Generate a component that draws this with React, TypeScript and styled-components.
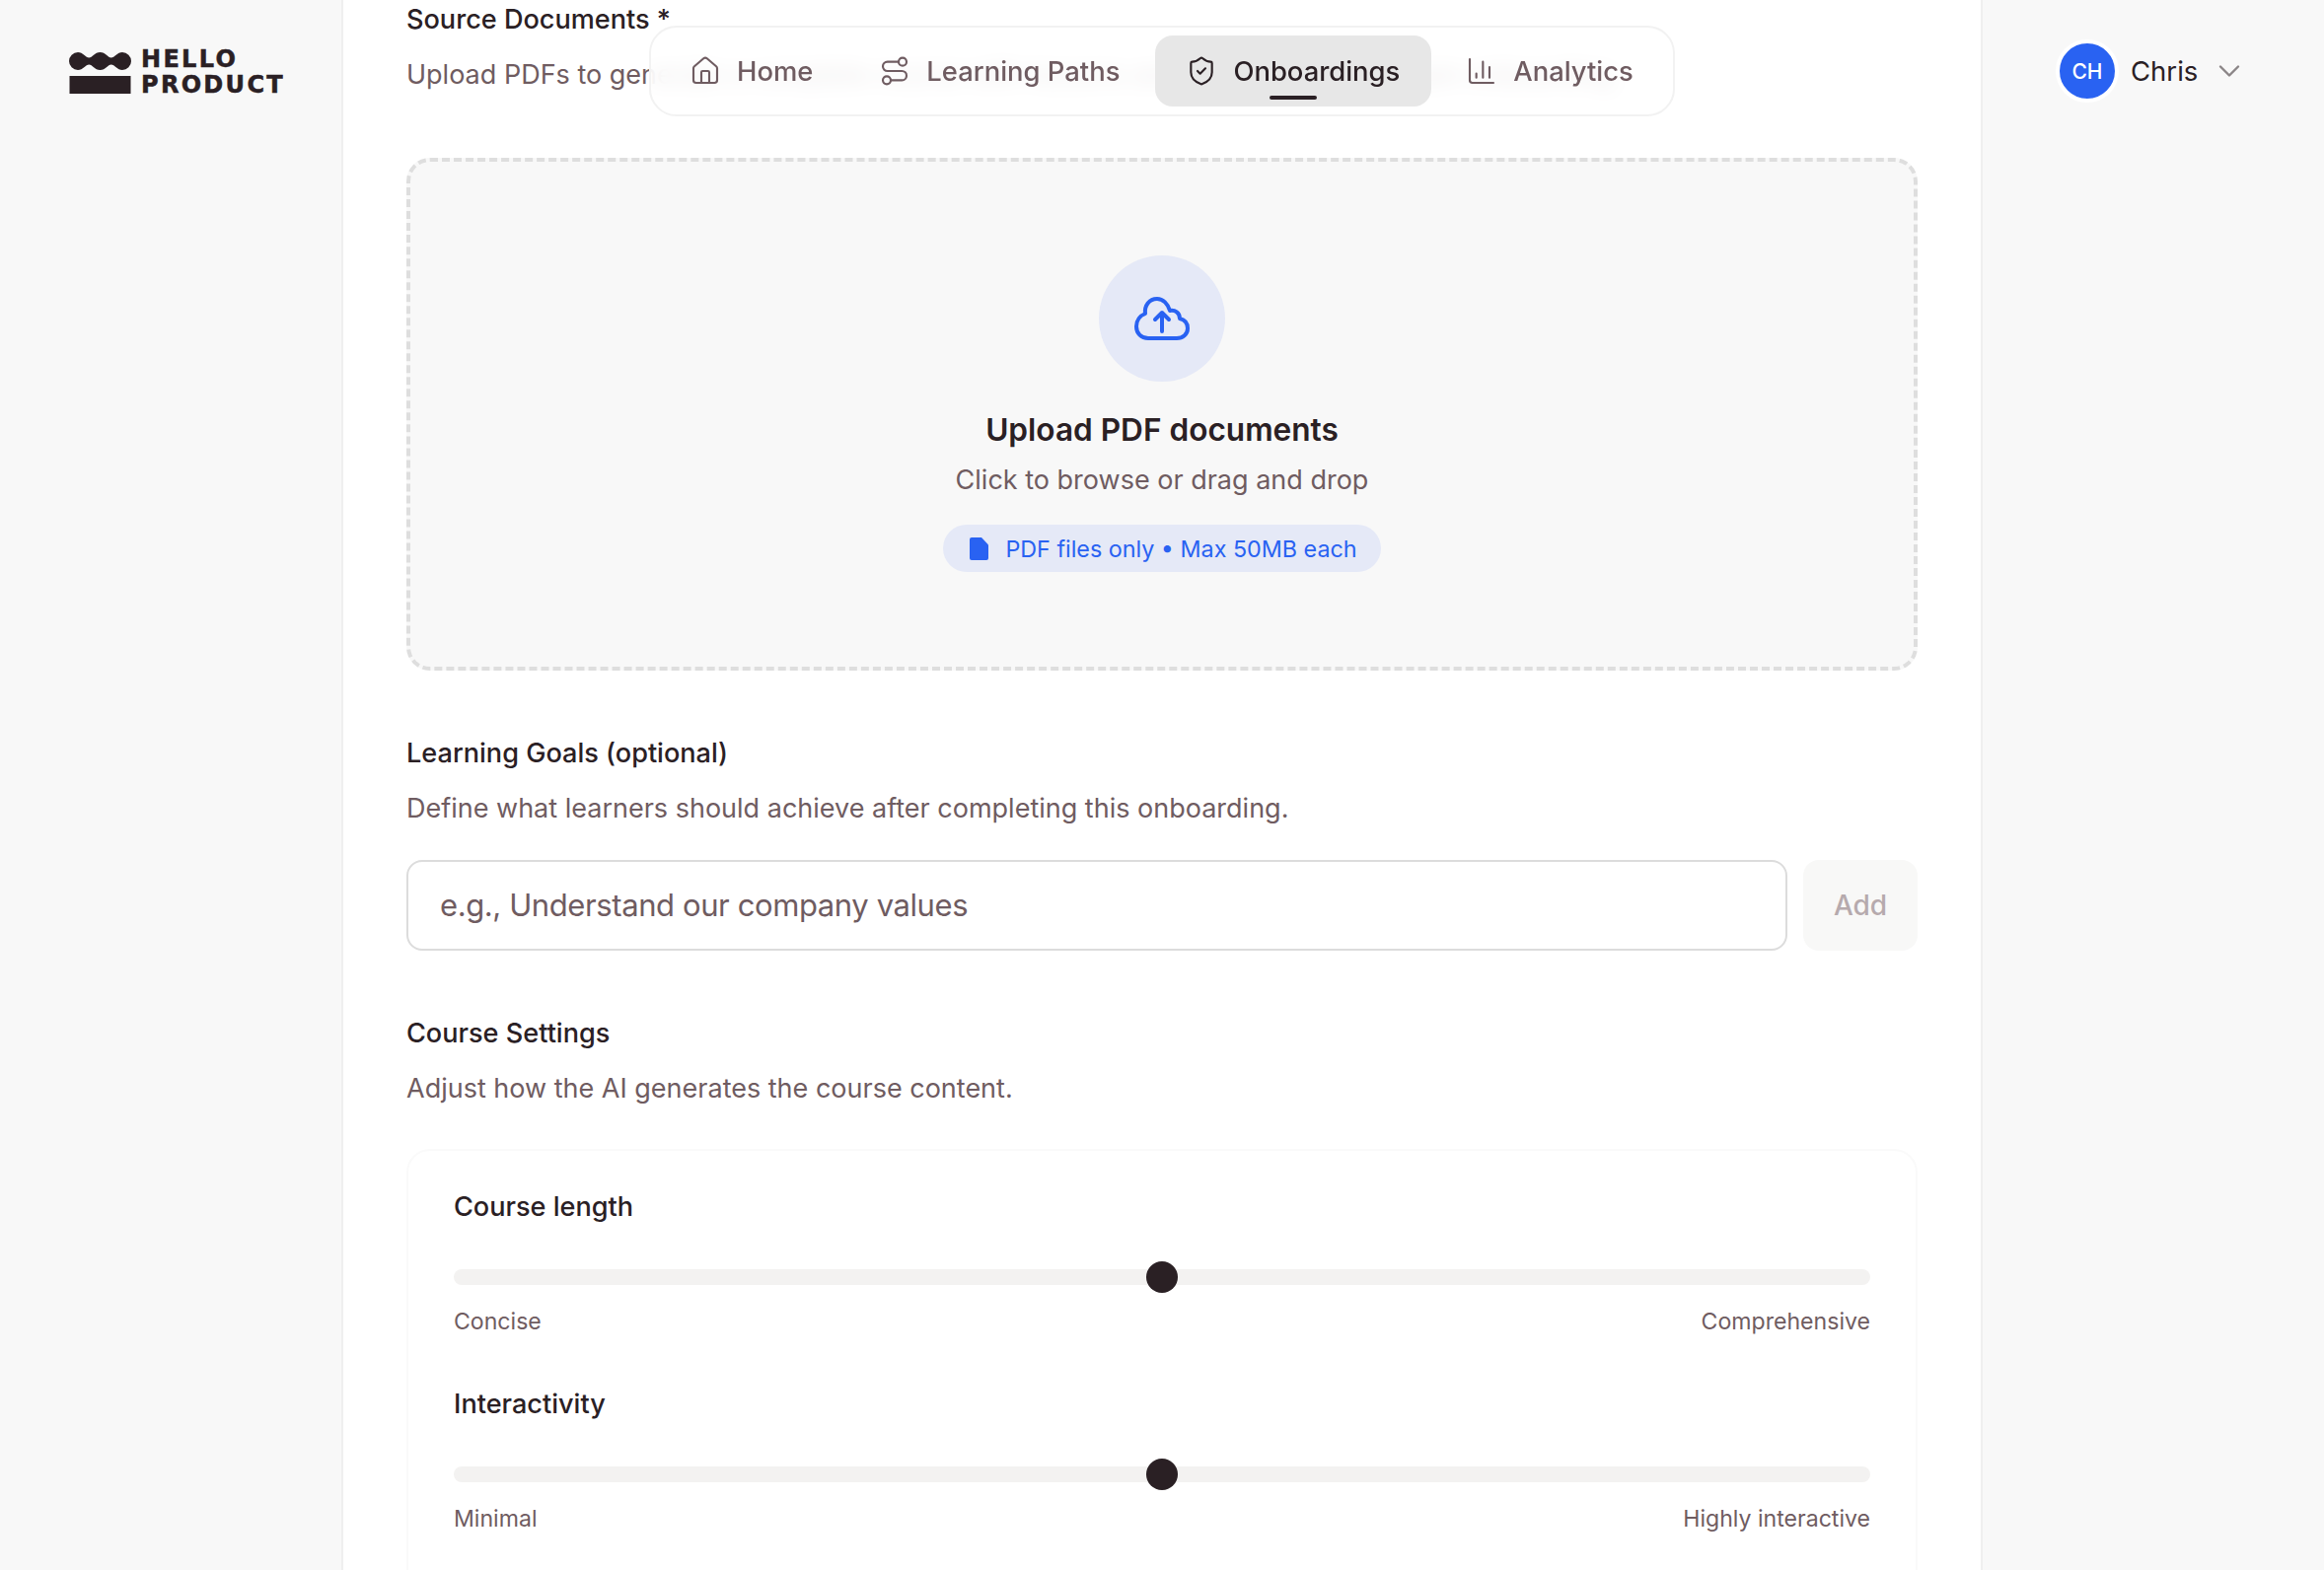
import { ChevronDown, ChartColumn, House, Route, ShieldCheck } from 'lucide-react';
import type { ComponentType } from 'react';
import styled, { createGlobalStyle } from 'styled-components';

const ink = '#2a2024';
const muted = '#6f5c61';
const blue = '#2962f2';
const paleBlue = '#e5e9f7';
const font = `Inter, 'Liberation Sans', sans-serif`;

const GlobalStyle = createGlobalStyle`
  html, body {
    margin: 0;
    height: 100%;
    overflow: hidden;
    background: #f8f8f8;
    font-family: ${font};
    color: ${ink};
  }
  * {
    box-sizing: border-box;
  }
`;

const Shell = styled.div`
  position: relative;
  display: grid;
  grid-template-columns: 346px 1fr 346px;
  height: 1592px;
  overflow: hidden;
`;

const LeftRail = styled.aside`
  display: flex;
  align-items: flex-start;
  padding: 49px 0 0 70px;
`;

const Logo = styled.div`
  display: flex;
  align-items: center;
  gap: 10px;
`;

const LogoText = styled.div`
  margin-top: -2px;
  font-family: 'DejaVu Sans', sans-serif;
  font-weight: 700;
  font-size: 24px;
  line-height: 26px;
  letter-spacing: 2.3px;
  -webkit-text-stroke: 0.5px ${ink};
  color: ${ink};
`;

const RightRail = styled.aside`
  display: flex;
  align-items: flex-start;
  padding: 40px 0 0 74px;
`;

const UserMenu = styled.div`
  display: flex;
  align-items: center;
  gap: 12px;
  font-size: 27.5px;
  color: ${ink};
`;

const Avatar = styled.div`
  display: flex;
  align-items: center;
  justify-content: center;
  width: 64px;
  height: 64px;
  border: 4px solid #fff;
  border-radius: 50%;
  background: ${blue};
  color: #fff;
  font-size: 21px;
  font-weight: 500;
`;

const ChevronWrap = styled.span`
  display: flex;
  margin-left: 2px;
  color: #8b8587;
`;

const Main = styled.main`
  background: #fff;
  border-left: 2px solid #efefef;
  border-right: 2px solid #efefef;
  padding: 1px 64px 0;
`;

const Label = styled.div`
  font-size: 27.1px;
  font-weight: 500;
  line-height: 38px;
  color: ${ink};
`;

const Hint = styled.p`
  margin: 17px 0 0;
  font-size: 27px;
  line-height: 40px;
  color: ${muted};
  white-space: nowrap;
`;

const Section = styled.section`
  margin-top: 65px;
`;

const Dropzone = styled.div`
  display: flex;
  flex-direction: column;
  align-items: center;
  height: 520px;
  margin-top: 64px;
  padding-top: 95px;
  border: 4px dashed #dedede;
  border-radius: 24px;
  background: #f8f8f8;
`;

const UploadCircle = styled.div`
  display: flex;
  align-items: center;
  justify-content: center;
  width: 128px;
  height: 128px;
  border-radius: 50%;
  background: ${paleBlue};
`;

const DropTitle = styled.div`
  margin-top: 29px;
  font-size: 31.6px;
  font-weight: 600;
  line-height: 40px;
  color: ${ink};
`;

const DropHint = styled.div`
  margin-top: 11px;
  font-size: 27px;
  line-height: 40px;
  color: ${muted};
`;

const Pill = styled.div`
  display: flex;
  align-items: center;
  gap: 17px;
  height: 48px;
  margin-top: 25px;
  padding: 0 24px 0 27px;
  border-radius: 24px;
  background: ${paleBlue};
  color: ${blue};
  font-size: 23.3px;
  white-space: nowrap;
`;

const InputRow = styled.div`
  display: flex;
  gap: 16px;
  margin-top: 32px;
`;

const GoalInput = styled.input`
  flex: 1;
  min-width: 0;
  height: 92px;
  padding: 0 32px 2px;
  border: 2px solid #dcdcdc;
  border-radius: 16px;
  background: #fff;
  font-family: ${font};
  font-size: 31px;
  letter-spacing: -0.4px;
  color: ${ink};
  outline: none;

  &::placeholder {
    color: ${muted};
    opacity: 1;
  }
`;

const AddButton = styled.button`
  width: 116px;
  height: 92px;
  border: 0;
  border-radius: 16px;
  background: #f8f8f7;
  font-family: ${font};
  font-size: 28px;
  font-weight: 500;
  color: #b6aaad;
`;

const SettingsCard = styled.div`
  margin-top: 41px;
  padding: 38px 46px 80px;
  border: 2px solid #fafafa;
  border-radius: 24px;
`;

const Setting = styled.div`
  & + & {
    margin-top: 48px;
  }
`;

const Track = styled.div`
  position: relative;
  height: 16px;
  margin-top: 44px;
  border-radius: 8px;
  background: #f3f2f1;
`;

const Thumb = styled.span`
  position: absolute;
  top: 50%;
  width: 32px;
  height: 32px;
  border-radius: 50%;
  background: ${ink};
  transform: translate(-50%, -50%);
`;

const RangeLabels = styled.div`
  display: flex;
  justify-content: space-between;
  margin-top: 20px;
  font-size: 23.1px;
  line-height: 34px;
  color: ${muted};
`;

const Nav = styled.nav`
  position: absolute;
  top: 26px;
  left: 50%;
  display: flex;
  align-items: center;
  gap: 4px;
  width: 1040px;
  height: 92px;
  padding: 0 8px;
  border: 2px solid #f2f2f2;
  border-radius: 28px;
  background: rgba(255, 255, 255, 0.86);
  backdrop-filter: blur(10px);
  transform: translateX(-50%);
`;

const NavItem = styled.a<{ $active?: boolean }>`
  position: relative;
  display: flex;
  align-items: center;
  gap: 16px;
  height: 72px;
  padding: 0 32px 0 31px;
  border-radius: 18px;
  background: ${p => (p.$active ? '#e7e7e7' : 'transparent')};
  color: ${p => (p.$active ? ink : muted)};
  font-size: 27.4px;
  font-weight: 500;
  white-space: nowrap;
`;

const ActiveMark = styled.span`
  position: absolute;
  left: 50%;
  bottom: 7px;
  width: 48px;
  height: 4px;
  border-radius: 2px;
  background: ${ink};
  transform: translateX(-50%);
`;

const LogoMark = () => (
  <svg width="63" height="42" viewBox="0 0 63 42" fill={ink}>
    <path d="M9 0C14 0 17 5.5 20.25 5.5C23.5 5.5 26 0 31.5 0C37 0 39.5 5.5 42.75 5.5C46 5.5 49 0 54 0A9 9 0 0 1 54 18C49 18 46 12.5 42.75 12.5C39.5 12.5 37 18 31.5 18C26 18 23.5 12.5 20.25 12.5C17 12.5 14 18 9 18A9 9 0 0 1 9 0Z" />
    <rect x="0.5" y="24" width="62" height="18" />
  </svg>
);

const CloudIcon = () => (
  <svg width="56" height="44" viewBox="0 0 56 44" fill="none" stroke={blue} strokeWidth="4" strokeLinecap="round" strokeLinejoin="round">
    <path d="M14 42H43C49 42 54 38 54 32C54 26 50 23 46 22C46 16 41 13 36 14C34 7 29 2 23 2C15 2 10 9 11 17C6 19 2 24 2 30C2 37 7 42 14 42Z" />
    <path d="M28 35V16M21 23L28 16L35 23" />
  </svg>
);

const FileIcon = () => (
  <svg width="19" height="23" viewBox="0 0 19 23" fill={blue}>
    <path d="M2 0H12L19 7.5V21A2 2 0 0 1 17 23H2A2 2 0 0 1 0 21V2A2 2 0 0 1 2 0Z" />
  </svg>
);

const navItems: { label: string; icon: ComponentType<{ size?: number; strokeWidth?: number }>; active?: boolean }[] = [
  { label: 'Home', icon: House },
  { label: 'Learning Paths', icon: Route },
  { label: 'Onboardings', icon: ShieldCheck, active: true },
  { label: 'Analytics', icon: ChartColumn },
];

const settings = [
  { name: 'Course length', low: 'Concise', high: 'Comprehensive', value: 50 },
  { name: 'Interactivity', low: 'Minimal', high: 'Highly interactive', value: 50 },
];

export default function App() {
  return (
    <>
      <GlobalStyle />
      <Shell>
        <LeftRail>
          <Logo>
            <LogoMark />
            <LogoText>HELLO<br />PRODUCT</LogoText>
          </Logo>
        </LeftRail>

        <Main>
          <Label>Source Documents *</Label>
          <Hint>Upload PDFs to generate a complete course with lessons and quizzes for your team onboarding.</Hint>

          <Dropzone>
            <UploadCircle>
              <CloudIcon />
            </UploadCircle>
            <DropTitle>Upload PDF documents</DropTitle>
            <DropHint>Click to browse or drag and drop</DropHint>
            <Pill>
              <FileIcon />
              PDF files only • Max 50MB each
            </Pill>
          </Dropzone>

          <Section>
            <Label>Learning Goals (optional)</Label>
            <Hint>Define what learners should achieve after completing this onboarding.</Hint>
            <InputRow>
              <GoalInput placeholder="e.g., Understand our company values" />
              <AddButton disabled>Add</AddButton>
            </InputRow>
          </Section>

          <Section>
            <Label>Course Settings</Label>
            <Hint>Adjust how the AI generates the course content.</Hint>
            <SettingsCard>
              {settings.map(s => (
                <Setting key={s.name}>
                  <Label>{s.name}</Label>
                  <Track>
                    <Thumb style={{ left: `${s.value}%` }} />
                  </Track>
                  <RangeLabels>
                    <span>{s.low}</span>
                    <span>{s.high}</span>
                  </RangeLabels>
                </Setting>
              ))}
            </SettingsCard>
          </Section>
        </Main>

        <RightRail>
          <UserMenu>
            <Avatar>CH</Avatar>
            Chris
            <ChevronWrap>
              <ChevronDown size={36} strokeWidth={1.6} />
            </ChevronWrap>
          </UserMenu>
        </RightRail>

        <Nav>
          {navItems.map(({ label, icon: Icon, active }) => (
            <NavItem key={label} $active={active}>
              <Icon size={32} strokeWidth={1.6} />
              {label}
              {active && <ActiveMark />}
            </NavItem>
          ))}
        </Nav>
      </Shell>
    </>
  );
}
